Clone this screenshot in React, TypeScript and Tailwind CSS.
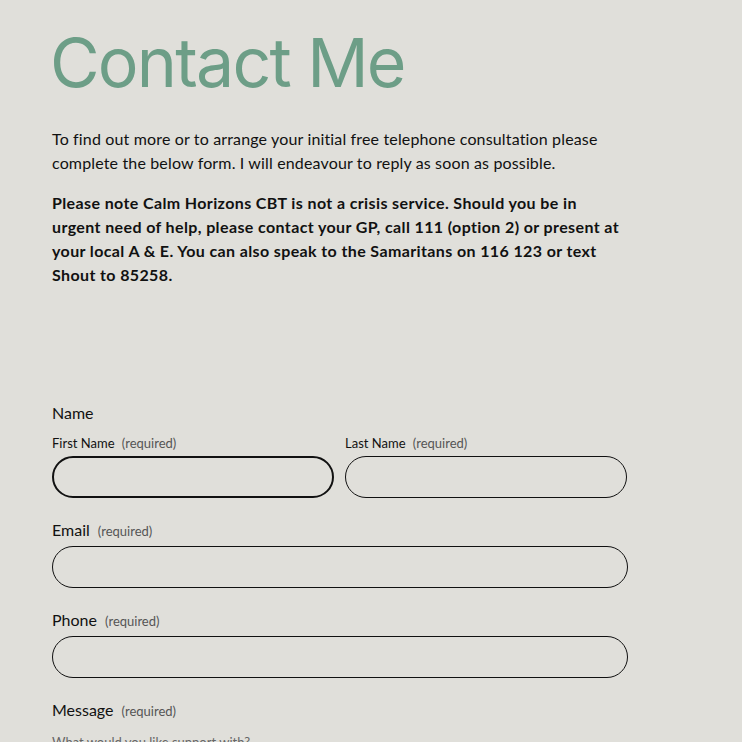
export default function App() {
  const body = { fontFamily: "Lato, 'Noto Sans', sans-serif" };
  return (
    <div className="min-h-[742px] bg-[#e0dfda] text-[#111111]" style={body}>
      <div className="pl-[52px] pr-[40px] pt-[22px] w-[680px]">
        <h1
          className="-ml-[2px] text-[68px] leading-[80px] text-[#6d9e87] font-normal tracking-[-1.8px]"
          style={{ fontFamily: "Inter, sans-serif" }}
        >
          Contact Me
        </h1>
        <p className="mt-[25px] text-[16px] leading-[24px] tracking-[0.15px] w-[575px]">
          To find out more or to arrange your initial free telephone consultation please complete the below form. I will endeavour to reply as soon as possible.
        </p>
        <p className="mt-[16px] text-[16px] leading-[24px] font-bold tracking-[0.38px] w-[575px]">
          Please note Calm Horizons CBT is not a crisis service. Should you be in urgent need of help, please contact your GP, call 111 (option 2) or present at your local A &amp; E. You can also speak to the Samaritans on 116 123 or text Shout to 85258.
        </p>

        <form className="mt-[115px] w-[576px] flex flex-col">
          <div className="text-[16px] leading-[22px]">Name</div>
          <div className="mt-[10px] grid grid-cols-[282px_282px] gap-[11px]">
            <label className="flex flex-col">
              <span className="text-[13px] leading-[18px]">
                First Name <span className="ml-[4px] text-[#555]">(required)</span>
              </span>
              <input className="mt-[4px] h-[42px] rounded-full border-2 border-[#111] bg-transparent outline-none" />
            </label>
            <label className="flex flex-col">
              <span className="text-[13px] leading-[18px]">
                Last Name <span className="ml-[4px] text-[#555]">(required)</span>
              </span>
              <input className="mt-[4px] h-[42px] rounded-full border border-[#111] bg-transparent outline-none" />
            </label>
          </div>

          <label className="mt-[21px] flex flex-col">
            <span className="text-[16px] leading-[22px]">
              Email <span className="ml-[4px] text-[13px] text-[#555]">(required)</span>
            </span>
            <input className="mt-[4px] h-[42px] rounded-full border border-[#111] bg-transparent outline-none" />
          </label>

          <label className="mt-[21px] flex flex-col">
            <span className="text-[16px] leading-[22px]">
              Phone <span className="ml-[4px] text-[13px] text-[#555]">(required)</span>
            </span>
            <input className="mt-[4px] h-[42px] rounded-full border border-[#111] bg-transparent outline-none" />
          </label>

          <label className="mt-[21px] flex flex-col">
            <span className="text-[16px] leading-[22px]">
              Message <span className="ml-[4px] text-[13px] text-[#555]">(required)</span>
            </span>
            <span className="mt-[11px] text-[13px] leading-[18px] text-[#666]">What would you like support with?</span>
          </label>
        </form>
      </div>
    </div>
  );
}
